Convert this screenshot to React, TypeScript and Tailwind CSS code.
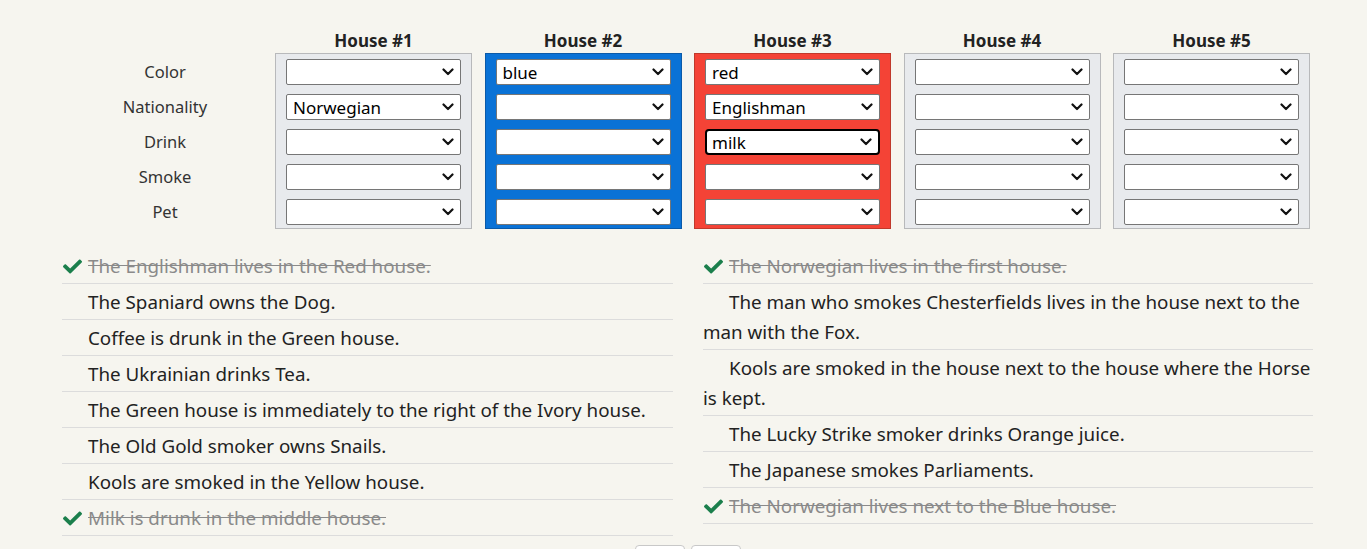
import React from "react";
import { FaCheck } from "react-icons/fa";

const FONT = { fontFamily: '"Noto Sans", "Open Sans", sans-serif' };

type House = { values: string[]; kind: "plain" | "blue" | "red" };

const houses: House[] = [
  { values: ["", "Norwegian", "", "", ""], kind: "plain" },
  { values: ["blue", "", "", "", ""], kind: "blue" },
  { values: ["red", "Englishman", "milk", "", ""], kind: "red" },
  { values: ["", "", "", "", ""], kind: "plain" },
  { values: ["", "", "", "", ""], kind: "plain" },
];

const labels = ["Color", "Nationality", "Drink", "Smoke", "Pet"];

const leftClues: [string, boolean][] = [
  ["The Englishman lives in the Red house.", true],
  ["The Spaniard owns the Dog.", false],
  ["Coffee is drunk in the Green house.", false],
  ["The Ukrainian drinks Tea.", false],
  ["The Green house is immediately to the right of the Ivory house.", false],
  ["The Old Gold smoker owns Snails.", false],
  ["Kools are smoked in the Yellow house.", false],
  ["Milk is drunk in the middle house.", true],
];

const rightClues: [string, boolean][] = [
  ["The Norwegian lives in the first house.", true],
  ["The man who smokes Chesterfields lives in the house next to the man with the Fox.", false],
  ["Kools are smoked in the house next to the house where the Horse is kept.", false],
  ["The Lucky Strike smoker drinks Orange juice.", false],
  ["The Japanese smokes Parliaments.", false],
  ["The Norwegian lives next to the Blue house.", true],
];

function Chevron() {
  return (
    <svg width="12" height="8" viewBox="0 0 12 8" className="absolute right-[6px] top-1/2 -translate-y-1/2 pointer-events-none">
      <path d="M1.5 1.5 L6 6 L10.5 1.5" fill="none" stroke="#111" strokeWidth="2.2" strokeLinecap="round" strokeLinejoin="round" />
    </svg>
  );
}

function Sel({ value, focused }: { value: string; focused?: boolean }) {
  return (
    <div
      className={
        focused
          ? "relative h-[26px] bg-white border-2 border-black rounded-[4px] flex items-center pl-[5px]"
          : "relative h-[26px] bg-white border border-[#767676] rounded-[2px] flex items-center pl-[6px]"
      }
    >
      <span className="text-[17px] leading-none text-black">{value}</span>
      <Chevron />
    </div>
  );
}

function Clue({ text, done }: { text: string; done: boolean }) {
  return (
    <div className="relative border-b border-[#dcdcdc] pt-[3px] pb-[2px] text-[18.8px] leading-[30px] indent-[26px] text-[#222]">
      {done && (
        <FaCheck className="absolute left-[1px] top-[9px] text-[#1b7f4c]" size={19} />
      )}
      <span className={done ? "line-through text-[#8a8a8a]" : ""}>{text}</span>
    </div>
  );
}

export default function App() {
  return (
    <div className="min-h-[549px] w-full bg-[#f6f5ef] overflow-hidden" style={FONT}>
      <div className="ml-[62px] w-[1251px] pt-[30px]">
        <div className="flex">
          <div className="w-[213px] pt-[23px]">
            <div className="pt-[6px] flex flex-col gap-[9px]">
              {labels.map((l) => (
                <div key={l} className="h-[26px] w-[206px] flex items-center justify-center text-[16.5px] text-[#333]">
                  {l}
                </div>
              ))}
            </div>
          </div>
          <div className="flex gap-[12.5px]">
            {houses.map((h, i) => (
              <div key={i} className="w-[197px] flex flex-col">
                <div className="h-[22px] mb-[1px] text-center font-bold text-[17px] leading-[22px] text-[#222]">
                  House #{i + 1}
                </div>
                <div
                  className={
                    h.kind === "blue"
                      ? "border border-[#0b5aa8] bg-[#0a72d6] px-[10px] pt-[5px] pb-[3px] flex flex-col gap-[9px]"
                      : h.kind === "red"
                      ? "border border-[#c0392b] bg-[#f44336] px-[10px] pt-[5px] pb-[3px] flex flex-col gap-[9px]"
                      : "border border-[#b8b9bb] bg-[#e8eaed] px-[10px] pt-[5px] pb-[3px] flex flex-col gap-[9px]"
                  }
                >
                  {h.values.map((v, j) => (
                    <Sel key={j} value={v} focused={i === 2 && j === 2} />
                  ))}
                </div>
              </div>
            ))}
          </div>
        </div>

        <div className="mt-[19px] grid grid-cols-[611px_610px] gap-[30px]">
          <div>
            {leftClues.map(([t, d]) => (
              <Clue key={t} text={t} done={d} />
            ))}
          </div>
          <div>
            {rightClues.map(([t, d]) => (
              <Clue key={t} text={t} done={d} />
            ))}
          </div>
        </div>

        <div className="mt-[9px] flex justify-center gap-[6px]">
          <button className="w-[50px] h-[30px] bg-white border border-[#c8c8c8] rounded-[4px] text-[15px]"> </button>
          <button className="w-[50px] h-[30px] bg-white border border-[#c8c8c8] rounded-[4px] text-[15px]"> </button>
        </div>
      </div>
    </div>
  );
}
